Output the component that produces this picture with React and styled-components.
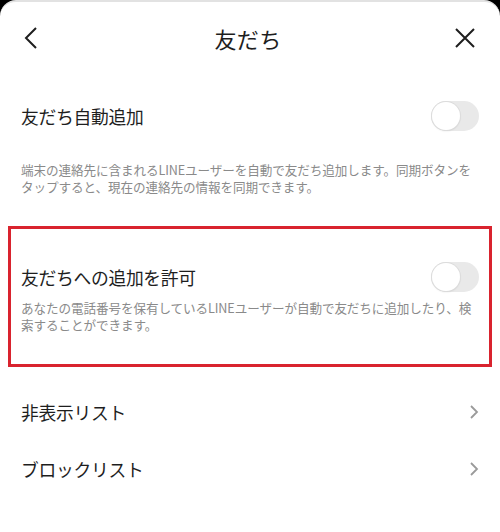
import React from "react";
import styled, { createGlobalStyle } from "styled-components";

const GlobalStyle = createGlobalStyle`
  html, body {
    margin: 0;
    padding: 0;
    background: #000;
  }
  body {
    font-family: "Noto Sans CJK JP", "Noto Sans", sans-serif;
    color: #1e1e1e;
  }
`;

const Sheet = styled.div`
  width: 500px;
  height: 532px;
  background: #fff;
  border-radius: 16px 16px 0 0;
  border-top: 2px solid #e2e2e2;
  box-sizing: border-box;
  overflow: hidden;
`;

const Header = styled.div`
  height: 72px;
  display: flex;
  align-items: center;
  justify-content: space-between;
  padding: 0 24px 0 20px;
`;

const Title = styled.h1`
  margin: 0;
  font-size: 22px;
  font-weight: 400;
  letter-spacing: 0.3px;
`;

const IconButton = styled.div`
  width: 22px;
  height: 22px;
  display: flex;
  align-items: center;
  justify-content: center;
`;

const Section = styled.section`
  margin: ${(p) => p.$mt || 0}px 8px 0;
  padding: ${(p) => p.$top}px 10px ${(p) => p.$bottom || 0}px;
  border: 3px solid ${(p) => (p.$highlight ? "#d9232e" : "transparent")};
`;

const ToggleRow = styled.div`
  height: 30px;
  display: flex;
  align-items: center;
  justify-content: space-between;
`;

const Label = styled.span`
  font-size: 17.8px;
  letter-spacing: -0.3px;
`;

const Desc = styled.p`
  margin: 0;
  padding-top: ${(p) => p.$top || 0}px;
  font-size: 12.6px;
  line-height: 17px;
  color: #8a8a8a;
  letter-spacing: -0.1px;
`;

const Track = styled.div`
  width: 48px;
  height: 30px;
  border-radius: 15px;
  background: #e9e9e9;
  display: flex;
  align-items: center;
  padding: 0 1px;
  box-sizing: border-box;
`;

const Knob = styled.div`
  width: 28px;
  height: 28px;
  border-radius: 50%;
  background: #fff;
  box-shadow: 0 0 0 1px #dcdcdc, 0 1px 2px rgba(0, 0, 0, 0.12);
`;

const List = styled.div`
  margin-top: 16px;
`;

const ListRow = styled.div`
  height: 57px;
  display: flex;
  align-items: center;
  justify-content: space-between;
  padding: 0 21px;
`;

const Toggle = () => (
  <Track>
    <Knob />
  </Track>
);

const Chevron = () => (
  <svg width="10" height="16" viewBox="0 0 10 16">
    <path d="M2 2 L8 8 L2 14" fill="none" stroke="#9a9a9a" strokeWidth="1.8" />
  </svg>
);

const App = () => {
  return (
    <>
      <GlobalStyle />
      <Sheet>
        <Header>
          <IconButton>
            <svg width="16" height="24" viewBox="0 0 16 24">
              <path d="M13 2 L3 12 L13 22" fill="none" stroke="#1e1e1e" strokeWidth="2" />
            </svg>
          </IconButton>
          <Title>友だち</Title>
          <IconButton>
            <svg width="22" height="22" viewBox="0 0 22 22">
              <path d="M2 2 L20 20 M20 2 L2 20" fill="none" stroke="#1e1e1e" strokeWidth="2" />
            </svg>
          </IconButton>
        </Header>

        <Section $top={24}>
          <ToggleRow>
            <Label>友だち自動追加</Label>
            <Toggle />
          </ToggleRow>
          <Desc $top={30}>
            端末の連絡先に含まれるLINEユーザーを自動で友だち追加します。同期ボタンを
            <br />
            タップすると、現在の連絡先の情報を同期できます。
          </Desc>
        </Section>

        <Section $highlight $mt={28} $top={33} $bottom={31}>
          <ToggleRow>
            <Label>友だちへの追加を許可</Label>
            <Toggle />
          </ToggleRow>
          <Desc $top={7}>
            あなたの電話番号を保有しているLINEユーザーが自動で友だちに追加したり、検
            <br />
            索することができます。
          </Desc>
        </Section>

        <List>
          <ListRow>
            <Label>非表示リスト</Label>
            <Chevron />
          </ListRow>
          <ListRow>
            <Label>ブロックリスト</Label>
            <Chevron />
          </ListRow>
        </List>
      </Sheet>
    </>
  );
};

export default App;
